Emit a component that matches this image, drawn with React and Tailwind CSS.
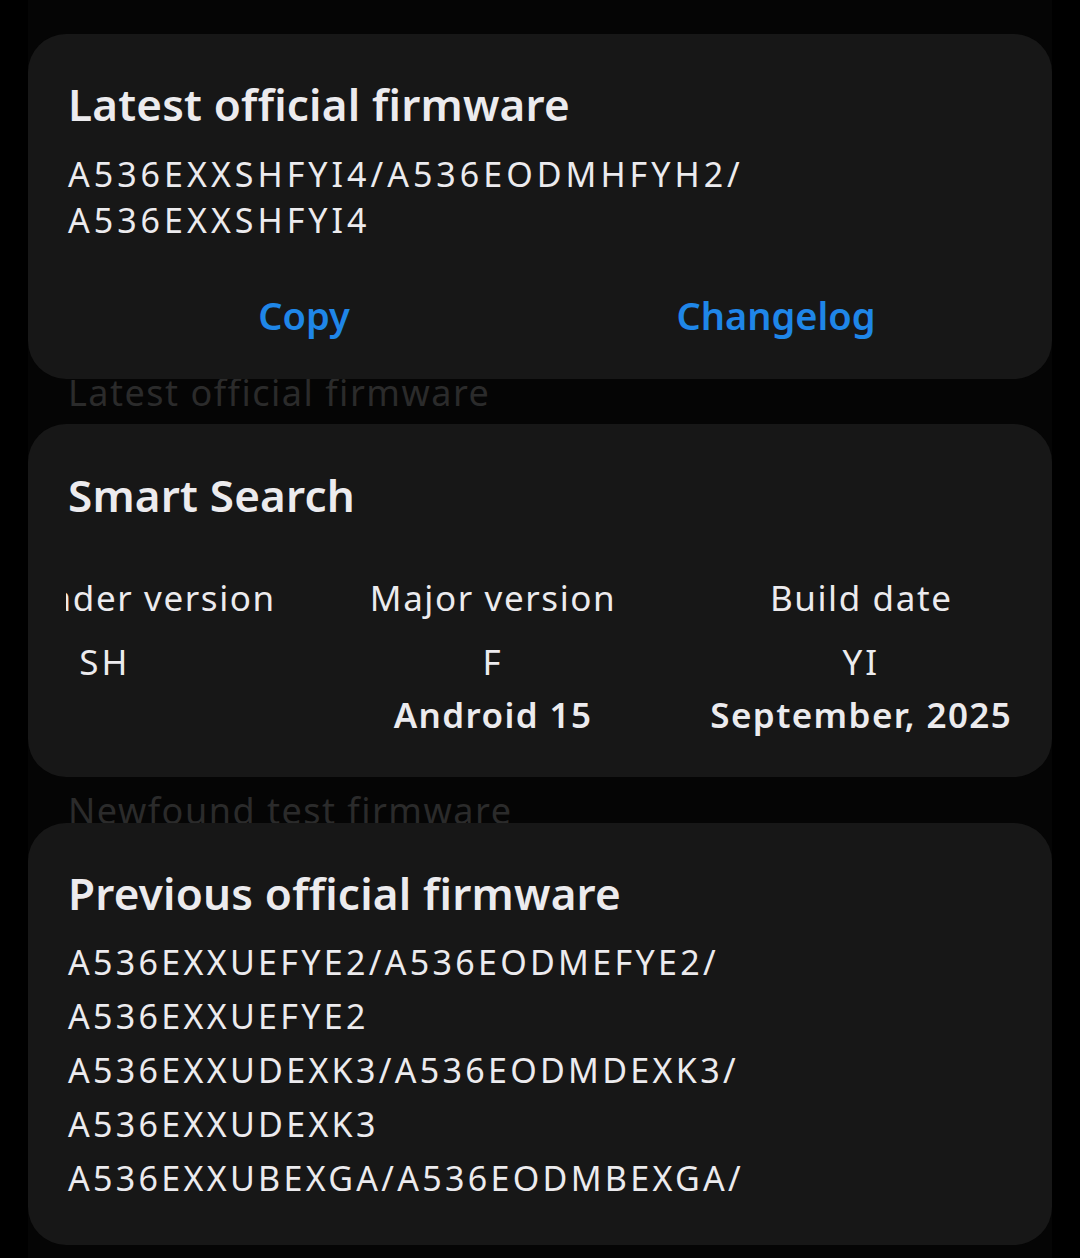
import React from "react";

const font = { fontFamily: '"Noto Sans", "Open Sans", sans-serif' };

function Card({ className = "", children }) {
  return (
    <div className={"relative z-10 rounded-[38px] bg-[#171717] " + className}>
      {children}
    </div>
  );
}

function Column({ label, value, extra }) {
  return (
    <div className="flex shrink-0 flex-col items-center px-[47px]">
      <div className="whitespace-nowrap text-[35px] leading-[48px] tracking-[1.6px] text-[#ecebee]">{label}</div>
      <div className="mt-[13px] whitespace-nowrap text-[35px] leading-[53px] tracking-[3px] text-[#ecebee]">{value}</div>
      <div className="h-[53px] whitespace-nowrap text-[35px] font-semibold leading-[53px] tracking-[1.4px] text-[#ecebee]">{extra}</div>
    </div>
  );
}

export default function App() {
  return (
    <div className="h-[1258px] w-[1080px] overflow-hidden bg-black" style={font}>
      <div className="mx-[28px] flex min-h-full flex-col bg-[#050505] pt-[34px]">
        <Card className="px-[40px] pb-[24px] pt-[44px]">
          <div className="text-[44px] font-semibold leading-[52px] tracking-[0.2px] text-[#ecebee]">Latest official firmware</div>
          <div className="mt-[21px] text-[34px] leading-[46px] tracking-[4px] text-[#ecebee]">
            A536EXXSHFYI4/A536EODMHFYH2/
            <br />
            A536EXXSHFYI4
          </div>
          <div className="mt-[32px] flex">
            <div className="flex-1 text-center text-[38px] font-semibold leading-[80px] text-[#1f86e8]">Copy</div>
            <div className="flex-1 text-center text-[38px] font-semibold leading-[80px] text-[#1f86e8]">Changelog</div>
          </div>
        </Card>

        <div className="mt-[-10px] px-[40px] text-[36px] leading-[48px] tracking-[1.5px] text-[#2b2b2b]">Latest official firmware</div>

        <Card className="mt-[7px] pb-[36px] pt-[45px]">
          <div className="px-[40px] text-[44px] font-semibold leading-[52px] tracking-[0.2px] text-[#ecebee]">Smart Search</div>
          <div className="ml-[38px] mr-[40px] mt-[53px] overflow-hidden">
            <div className="ml-[-179px] flex">
              <Column label="Bootloader version" value="SH" extra="" />
              <Column label="Major version" value="F" extra="Android 15" />
              <Column label="Build date" value="YI" extra="September, 2025" />
            </div>
          </div>
        </Card>

        <div className="mt-[10px] px-[40px] text-[36px] leading-[48px] tracking-[1.5px] text-[#2b2b2b]">Newfound test firmware</div>

        <Card className="mt-[-12px] px-[40px] pb-[40px] pt-[44px]">
          <div className="text-[44px] font-semibold leading-[52px] tracking-[0.2px] text-[#ecebee]">Previous official firmware</div>
          <div className="mt-[16px] text-[34px] leading-[54px] tracking-[3.3px] text-[#ecebee]">
            <div>A536EXXUEFYE2/A536EODMEFYE2/</div>
            <div>A536EXXUEFYE2</div>
            <div>A536EXXUDEXK3/A536EODMDEXK3/</div>
            <div>A536EXXUDEXK3</div>
            <div>A536EXXUBEXGA/A536EODMBEXGA/</div>
          </div>
        </Card>
      </div>
    </div>
  );
}
